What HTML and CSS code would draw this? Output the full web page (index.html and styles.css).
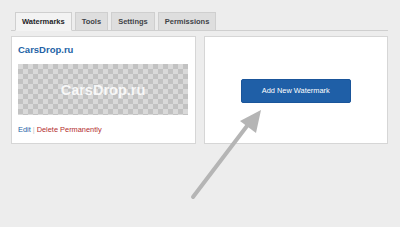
FILE: index.html
```html
<!DOCTYPE html>
<html>
<head>
<meta charset="utf-8">
<link rel="stylesheet" href="styles.css">
</head>
<body>
<div class="wrap">
  <nav class="tabs">
    <a class="tab active">Watermarks</a>
    <a class="tab">Tools</a>
    <a class="tab">Settings</a>
    <a class="tab">Permissions</a>
  </nav>
  <div class="cards">
    <div class="card">
      <div class="title">CarsDrop.ru</div>
      <div class="preview"><span>CarsDrop.ru</span></div>
      <div class="actions"><a class="edit">Edit</a><span class="sep">|</span><a class="del">Delete Permanently</a></div>
    </div>
    <div class="card add">
      <button class="btn">Add New Watermark</button>
    </div>
  </div>
</div>
<svg class="arrow" width="400" height="227" viewBox="0 0 400 227">
  <line x1="193" y1="197" x2="250" y2="122" stroke="#b5b5b5" stroke-width="4" stroke-linecap="round"/>
  <polygon points="261,110 240,121 256,133" fill="#b5b5b5"/>
</svg>
</body>
</html>
```

FILE: styles.css
```css
html, body {
  margin: 0;
  padding: 0;
}
body {
  background: #ededed;
  font-family: "Liberation Sans", Arial, sans-serif;
  width: 400px;
  height: 227px;
  overflow: hidden;
  position: relative;
}
.wrap {
  padding: 12px 12px 0 11px;
}
.tabs {
  display: flex;
  gap: 3px;
  padding-left: 4px;
  border-bottom: 1px solid #cfcfcf;
  height: 18px;
}
.tab {
  box-sizing: border-box;
  height: 19px;
  padding: 0 6px;
  border: 1px solid #cfcfcf;
  background: #dedede;
  color: #3e4347;
  font-size: 7.5px;
  font-weight: 700;
  line-height: 17px;
}
.tab.active {
  background: #f3f3f3;
  border-bottom-color: #f3f3f3;
  color: #1d2327;
}
.cards {
  display: flex;
  gap: 8px;
  margin-top: 5px;
}
.card {
  box-sizing: border-box;
  width: 185px;
  height: 108px;
  background: #fff;
  border: 1px solid #d6d6d6;
  padding: 7px 6px 0 6px;
}
.title {
  color: #2463a6;
  font-size: 9.5px;
  font-weight: 700;
  line-height: 12px;
  height: 20px;
}
.preview {
  width: 170px;
  height: 51px;
  background-color: #d9d9d9;
  background-image: conic-gradient(#c2c2c2 25%, transparent 0 50%, #c2c2c2 0 75%, transparent 0);
  background-size: 10px 10px;
  display: flex;
  align-items: center;
  justify-content: center;
}
.preview span {
  color: rgba(255,255,255,0.85);
  font-size: 14.5px;
  font-weight: 700;
}
.actions {
  margin-top: 10px;
  font-size: 7.4px;
  line-height: 10px;
}
.edit { color: #2463a6; }
.sep { color: #c3c4c7; margin: 0 2px; }
.del { color: #b32d2e; }
.card.add {
  display: flex;
  align-items: center;
  justify-content: center;
  padding: 0;
}
.btn {
  width: 110px;
  height: 24px;
  margin-top: 1px;
  background: #1f5fa7;
  border: 1px solid #1a559a;
  border-radius: 2px;
  color: #fff;
  font-family: "Liberation Sans", Arial, sans-serif;
  font-size: 7.4px;
  padding: 0;
}
.arrow {
  position: absolute;
  left: 0;
  top: 0;
}
```
